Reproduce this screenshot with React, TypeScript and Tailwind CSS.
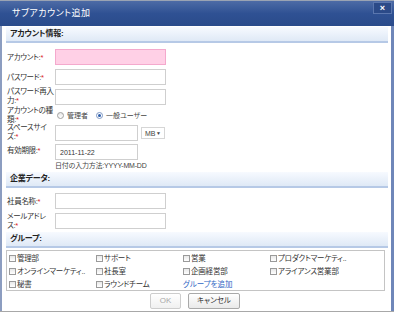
import React from "react";

const Req = () => <span className="text-[#e02020]">*</span>;

const SectionHeader = ({ title, className = "" }: { title: string; className?: string }) => (
  <div
    className={
      "h-[16px] shrink-0 flex items-center pl-[4px] bg-gradient-to-b from-[#f7faff] to-[#dfe9f6] border-b-2 border-[#b6c9e6] text-[8px] font-bold text-[#222] tracking-[-0.2px] " +
      className
    }
  >
    {title}
  </div>
);

const Input = ({ w = 111, pink = false, value = "", className = "" }: { w?: number; pink?: boolean; value?: string; className?: string }) => (
  <div
    className={
      (pink ? "bg-[#ffd0e6] border-[#f4a9cd] " : "bg-white border-[#cfcfcf] ") +
      "border h-[16px] shrink-0 flex items-center pl-[4px] text-[7px] text-[#333] " +
      className
    }
    style={{ width: w }}
  >
    {value}
  </div>
);

const Label = ({ children, className = "" }: { children: React.ReactNode; className?: string }) => (
  <div className={"w-[48px] shrink-0 whitespace-nowrap text-[7.5px] tracking-[-0.3px] leading-[9px] " + className}>{children}</div>
);

const Check = ({ label, link = false }: { label: string; link?: boolean }) => (
  <div className="w-[87px] h-[13px] flex items-center">
    {link ? (
      <span className="text-[7.5px] text-[#2f66c4]">{label}</span>
    ) : (
      <>
        <span className="w-[7px] h-[7px] border border-[#9a9a9a] bg-gradient-to-b from-[#e8e8e8] to-white mr-[1px] shrink-0" />
        <span className="text-[7.5px] text-[#333] whitespace-nowrap tracking-[-0.2px]">{label}</span>
      </>
    )}
  </div>
);

export default function App() {
  return (
    <div className="w-[396px] h-[314px] bg-white relative overflow-hidden font-['Liberation_Sans','Noto_Sans_CJK_JP',sans-serif] [font-feature-settings:'palt'] leading-none">
      <div className="w-[394px] h-[312px] flex flex-col border-b border-[#a8a8a8]">
        {/* title bar */}
        <div className="h-[26px] shrink-0 border-t border-[#9aa3b3] bg-gradient-to-b from-[#4d6ba6] via-[#2f5193] to-[#2a4b8b] flex items-center pl-[12px] relative">
          <span className="text-white text-[9px] tracking-[0.5px]">サブアカウント追加</span>
          <div className="absolute right-[2px] top-[1px] w-[19px] h-[12px] border border-[#5a76ae] bg-[#2b4a88] flex items-center justify-center">
            <span className="text-white text-[9px] font-bold leading-none">×</span>
          </div>
        </div>
        {/* body */}
        <div className="flex-1 flex flex-col border-l-2 border-l-[#8c9dc0] border-r-[3px] border-r-[#6f87b9] pl-[4px] pr-[3px] pt-[1px]">
          <SectionHeader title="アカウント情報:" />
          <div className="flex flex-col pl-[1px] text-[#333]">
            <div className="flex items-center h-[16px] mt-[6px]">
              <Label>アカウント:<Req /></Label>
              <Input pink />
            </div>
            <div className="flex items-center h-[16px] mt-[4px]">
              <Label>パスワード:<Req /></Label>
              <Input />
            </div>
            <div className="flex items-center h-[16px] mt-[4px]">
              <Label className="-mt-[3px]">パスワード再入<br />力:<Req /></Label>
              <Input />
            </div>
            <div className="flex items-center mt-[2px] h-[16px]">
              <Label>アカウントの種<br />類:<Req /></Label>
              <div className="flex items-center ml-[2px] text-[7px]">
                <span className="w-[7px] h-[7px] rounded-full border border-[#a0a0a0] bg-gradient-to-b from-[#e6e6e6] to-white" />
                <span className="ml-[3px] text-[#444]">管理者</span>
                <span className="ml-[8px] w-[7px] h-[7px] rounded-full border border-[#7e98c4] bg-white flex items-center justify-center">
                  <span className="w-[3px] h-[3px] rounded-full bg-[#2a5caa]" />
                </span>
                <span className="ml-[3px] text-[#444]">一般ユーザー</span>
              </div>
            </div>
            <div className="flex items-center h-[16px] mt-[2px]">
              <Label className="-mt-[3px]">スペースサイ<br />ズ:<Req /></Label>
              <Input w={83} />
              <div className="ml-[3px] w-[24px] h-[12px] border border-[#d6d6d6] flex items-center justify-between px-[3px] text-[7px] text-[#444]">
                <span>MB</span>
                <span className="text-[5px]">▼</span>
              </div>
            </div>
            <div className="flex items-start h-[16px] mt-[3px]">
              <Label className="mt-[2px]">有効期限:<Req /></Label>
              <Input w={83} value="2011-11-22" />
            </div>
            <div className="ml-[48px] h-[9px] mt-[1px] flex items-center text-[7px] text-[#444] tracking-[-0.2px]">日付の入力方法:YYYY-MM-DD</div>
          </div>
          <SectionHeader title="企業データ:" className="mt-[2px]" />
          <div className="flex flex-col pl-[1px] text-[#333]">
            <div className="flex items-center h-[16px] mt-[5px]">
              <Label>社員名称:<Req /></Label>
              <Input />
            </div>
            <div className="flex items-center h-[16px] mt-[4px]">
              <Label>メールアドレ<br />ス:<Req /></Label>
              <Input />
            </div>
          </div>
          <SectionHeader title="グループ:" className="mt-[3px]" />
          <div className="mt-[2px] h-[41px] shrink-0 border border-[#c4c4c4] pl-[2px] pt-[1px] mr-[3px] flex flex-col">
            <div className="flex">
              <Check label="管理部" />
              <Check label="サポート" />
              <Check label="営業" />
              <Check label="プロダクトマーケティ.." />
            </div>
            <div className="flex">
              <Check label="オンラインマーケティ.." />
              <Check label="社長室" />
              <Check label="企画経営部" />
              <Check label="アライアンス営業部" />
            </div>
            <div className="flex">
              <Check label="秘書" />
              <Check label="ラウンドチーム" />
              <Check label="グループを追加" link />
            </div>
          </div>
          <div className="flex justify-center gap-[7px] mt-[2px] pr-[4px]">
            <div className="w-[31px] h-[16px] border border-[#cdcdcd] rounded-[2px] bg-gradient-to-b from-white to-[#f0f0f0] flex items-center justify-center text-[8px] text-[#a8a8a8]">OK</div>
            <div className="w-[52px] h-[16px] border border-[#a9a9a9] rounded-[2px] bg-gradient-to-b from-white to-[#e9e9e9] flex items-center justify-center text-[7.5px] text-[#333]">キャンセル</div>
          </div>
        </div>
      </div>
    </div>
  );
}
